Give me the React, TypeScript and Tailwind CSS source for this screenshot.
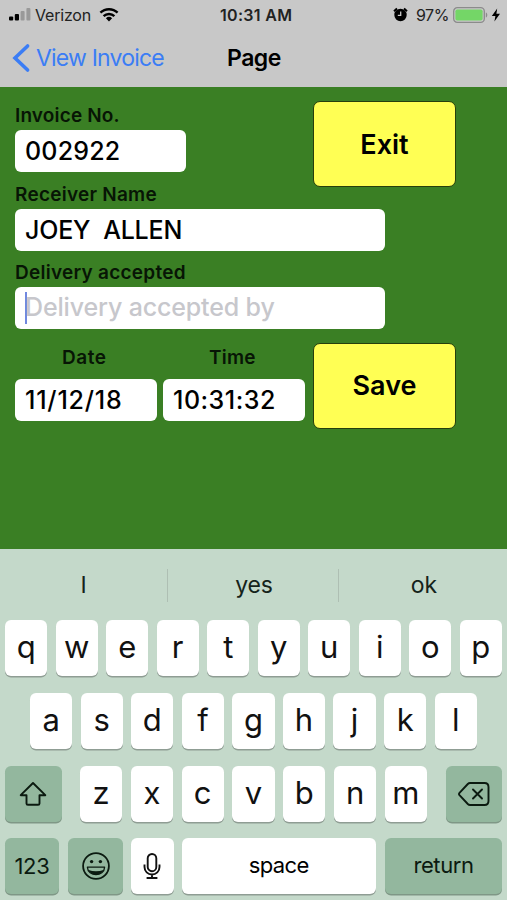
import React from "react";
import { useState } from "react";

const Key = ({ label }: { label: string }) => (
  <button className="flex h-[56px] w-[42.3px] shrink-0 items-center justify-center rounded-[6px] bg-white pb-[3px] text-[31px] leading-none font-normal text-[#111] shadow-[0_1.5px_0_#8f9d94]">
    {label}
  </button>
);

const StatusBar = () => (
  <div className="flex h-[30px] items-center text-[16px] leading-none text-[#222]">
    <svg className="ml-[8px] shrink-0" width="24" height="16" viewBox="0 0 24 16">
      <rect x="1" y="9.4" width="4.2" height="4" rx="1" fill="#000" />
      <rect x="6.8" y="7" width="4.2" height="6.4" rx="1" fill="#000" />
      <rect x="12.6" y="4" width="4" height="9.4" rx="1" fill="#999" />
      <rect x="18.4" y="1" width="4" height="12.4" rx="1" fill="#999" />
    </svg>
    <span className="ml-[3px] w-[57px] text-[16px] tracking-[-0.2px] whitespace-nowrap">Verizon</span>
    <svg className="mb-[2px] ml-[7px] shrink-0" width="20" height="15" viewBox="0 0 20 15" fill="none" stroke="#000" strokeWidth="2.4">
      <path d="M1.4 5.7a12.4 12.4 0 0 1 17.2 0" />
      <path d="M4.6 9.1a7.8 7.8 0 0 1 10.8 0" />
      <path d="M6.9 11.2a4.6 4.6 0 0 1 6.2 0L10 14.4z" fill="#000" stroke="none" />
    </svg>
    <span className="ml-[101px] w-[74px] text-[16px] font-semibold tracking-[0.3px] whitespace-nowrap">10:31 AM</span>
    <svg className="mb-px ml-[99px] shrink-0" width="15" height="15" viewBox="0 0 15 15">
      <circle cx="7.5" cy="8" r="6.2" fill="#000" />
      <path d="M1 4.2 4 1.5M14 4.2 11 1.5" stroke="#000" strokeWidth="2" />
      <path d="M7.7 4.4v4H4.8" fill="none" stroke="#c8c8c8" strokeWidth="1.3" />
    </svg>
    <span className="ml-[8px] w-[33px] text-[16px] tracking-[-0.5px] whitespace-nowrap">97%</span>
    <svg className="mb-px ml-[4px] shrink-0" width="36" height="16" viewBox="0 0 36 16">
      <rect x="0.7" y="0.7" width="30.6" height="14.6" rx="3.6" fill="none" stroke="#8b8b8b" strokeWidth="1.3" />
      <rect x="2.4" y="2.4" width="27.2" height="11.2" rx="1.8" fill="#74d667" />
      <path d="M32.8 5.5c2 .6 2 4.4 0 5z" fill="#8b8b8b" />
    </svg>
    <svg className="ml-[2px] shrink-0" width="10" height="14" viewBox="0 0 10 14">
      <path d="M6.2.5.8 8h3.6l-1 5.5L9 5.8H5.4z" fill="#000" />
    </svg>
  </div>
);

const Header = () => (
  <header className="h-[87px] bg-[#c8c8c8]">
    <StatusBar />
    <div className="flex h-[56px] items-center">
      <svg className="ml-[12px] shrink-0" width="19" height="30" viewBox="0 0 19 30">
        <path d="M15.6 3 3 15l12.6 12" fill="none" stroke="#3b7df5" strokeWidth="3.6" strokeLinecap="round" strokeLinejoin="miter" />
      </svg>
      <a className="ml-[5px] w-[128px] text-[23px] leading-none tracking-[-0.8px] whitespace-nowrap text-[#3b7df5]">View Invoice</a>
      <h1 className="ml-[63px] text-[23px] leading-none font-semibold tracking-[-0.5px] text-black">Page</h1>
    </div>
  </header>
);

const label = "flex h-[29px] items-center text-[19px] leading-none font-semibold whitespace-pre text-[#071505]";
const field = "h-[42px] rounded-[6px] bg-white px-[10px] text-[25px] font-medium text-black outline-none";
const yellow =
  "h-[86px] w-[143px] shrink-0 rounded-[7px] border-[1.5px] border-[#263f0c] bg-[#ffff54] text-[27px] leading-none font-semibold text-black";

const Form = () => {
  const [receiver, setReceiver] = useState("JOEY  ALLEN");
  const [acceptedBy, setAcceptedBy] = useState("");

  return (
    <main className="h-[462px] bg-[#3a7f24] pt-[14px] pl-[15px]">
      <div className="flex h-[79px] items-start">
        <div className="flex w-[298px] flex-col">
          <label className={`${label} tracking-[0.15px]`}>Invoice No.</label>
          <input className={`${field} w-[170.5px] tracking-[0.2px]`} value="002922" readOnly />
        </div>
        <button className={yellow}>Exit</button>
      </div>
      <div className="flex h-[77.5px] w-[369.5px] flex-col">
        <label className={`${label} tracking-[0.25px]`}>Receiver Name</label>
        <input
          className={`${field} tracking-[-0.2px]`}
          value={receiver}
          onChange={(e) => setReceiver(e.target.value)}
        />
      </div>
      <div className="flex h-[85px] w-[369.5px] flex-col">
        <label className={`${label} tracking-[0.25px]`}>Delivery accepted</label>
        <div className="flex h-[42px] items-center rounded-[6px] bg-white pl-[9.5px]">
          <span className="h-[32px] w-[2.5px] shrink-0 bg-[#7188e0]" />
          <input
            className="-ml-[2px] h-[42px] w-[340px] pb-[2px] text-[25px] font-medium tracking-[-0.15px] text-black outline-none placeholder:text-[#c7c7cc]"
            placeholder="Delivery accepted by"
            value={acceptedBy}
            onChange={(e) => setAcceptedBy(e.target.value)}
          />
        </div>
      </div>
      <div className="flex items-start">
        <div className="flex w-[148px] flex-col gap-[7px]">
          <label className={`${label} pl-[47px] tracking-[0.5px]`}>Date</label>
          <input className={`${field} w-[142px] tracking-[0.8px]`} value="11/12/18" readOnly />
        </div>
        <div className="flex w-[150px] flex-col gap-[7px]">
          <label className={`${label} pl-[46px] tracking-[0.2px]`}>Time</label>
          <input className={`${field} w-[142px] tracking-[0.5px]`} value="10:31:32" readOnly />
        </div>
        <button className={yellow}>Save</button>
      </div>
    </main>
  );
};

const darkKey = "flex h-[56px] shrink-0 items-center justify-center rounded-[6px] bg-[#93b79e] text-[#0b1a10] shadow-[0_1.5px_0_#7f9786]";

const Keyboard = () => (
  <section className="h-[351px] bg-[#c4d9ca]">
    <div className="flex h-[71px] items-center pt-[2px] text-[23px] leading-none text-[#15231a]">
      <span className="w-[167px] shrink-0 text-center">I</span>
      <span className="h-[33px] w-px shrink-0 bg-[#aebfb3]" />
      <span className="w-[170px] shrink-0 pl-[2px] text-center tracking-[-0.2px]">yes</span>
      <span className="h-[33px] w-px shrink-0 bg-[#aebfb3]" />
      <span className="w-[168px] shrink-0 pl-[2px] text-center">ok</span>
    </div>
    <div className="flex flex-col gap-[16.8px] px-[5px]">
      <div className="flex justify-between">
        {"qwertyuiop".split("").map((k) => (
          <Key key={k} label={k} />
        ))}
      </div>
      <div className="flex justify-between px-[25px]">
        {"asdfghjkl".split("").map((k) => (
          <Key key={k} label={k} />
        ))}
      </div>
      <div className="flex justify-between">
        <button className={`${darkKey} w-[56.5px]`}>
          <svg width="28" height="26" viewBox="0 0 28 26" fill="none" stroke="currentColor" strokeWidth="1.9" strokeLinejoin="round">
            <path d="M14 2 1.7 14.2h5.8v8.2q0 1.4 1.4 1.4h10.2q1.4 0 1.4-1.4v-8.2h5.8z" />
          </svg>
        </button>
        <div className="flex w-[347px] justify-between">
          {"zxcvbnm".split("").map((k) => (
            <Key key={k} label={k} />
          ))}
        </div>
        <button className={`${darkKey} w-[56.5px]`}>
          <svg width="32" height="24" viewBox="0 0 32 24" fill="none" stroke="currentColor" strokeWidth="1.9" strokeLinejoin="round" strokeLinecap="round">
            <path d="M12 1h14.5q4 0 4 4v14q0 4-4 4H12q-1.2 0-2.2-1L1.5 13.2q-1-1.2 0-2.4L9.8 2q1-1 2.2-1z" />
            <path d="m15 7.5 9 9M24 7.5l-9 9" />
          </svg>
        </button>
      </div>
      <div className="flex">
        <button className={`${darkKey} w-[54px] text-[22px] tracking-[-0.3px]`}>123</button>
        <button className={`${darkKey} ml-[9px] w-[55px]`}>
          <svg width="28" height="28" viewBox="0 0 28 28" fill="none" stroke="currentColor" strokeWidth="1.8">
            <circle cx="14" cy="14" r="12.9" />
            <circle cx="9.6" cy="9.6" r="1.7" fill="currentColor" stroke="none" />
            <circle cx="18.4" cy="9.6" r="1.7" fill="currentColor" stroke="none" />
            <path d="M5.4 15.2h17.2c-.4 9.8-16.8 9.8-17.2 0z" strokeWidth="1.3" strokeLinejoin="round" />
            <path d="M6.4 18q7.600 2.400 15.200 0-2.400 4.600-7.600 4.600T6.400 18z" fill="currentColor" stroke="none" />
          </svg>
        </button>
        <button className="ml-[8px] flex h-[56px] w-[42.5px] items-center justify-center rounded-[6px] bg-white shadow-[0_1.5px_0_#8f9d94]">
          <svg width="18" height="26" viewBox="0 0 18 26" fill="none" stroke="#111" strokeWidth="1.9">
            <rect x="4.7" y="1" width="8.6" height="17.2" rx="4.3" />
            <path d="M1.5 11.5V14a7.5 7.5 0 0 0 15 0v-2.5M9 21.5V25M3.600 25h10.800" />
          </svg>
        </button>
        <button className="ml-[8px] h-[56px] w-[194.5px] rounded-[6px] bg-white pb-[2px] text-[22px] leading-none tracking-[-0.6px] text-black shadow-[0_1.5px_0_#8f9d94]">
          space
        </button>
        <button className={`${darkKey} ml-[9px] w-[117px] pb-px text-[22px] tracking-[-0.4px]`}>return</button>
      </div>
    </div>
  </section>
);

const App = () => {
  return (
    <div className="h-[900px] w-[507px] overflow-hidden font-['Inter',sans-serif]">
      <Header />
      <Form />
      <Keyboard />
    </div>
  );
};

export default App;
